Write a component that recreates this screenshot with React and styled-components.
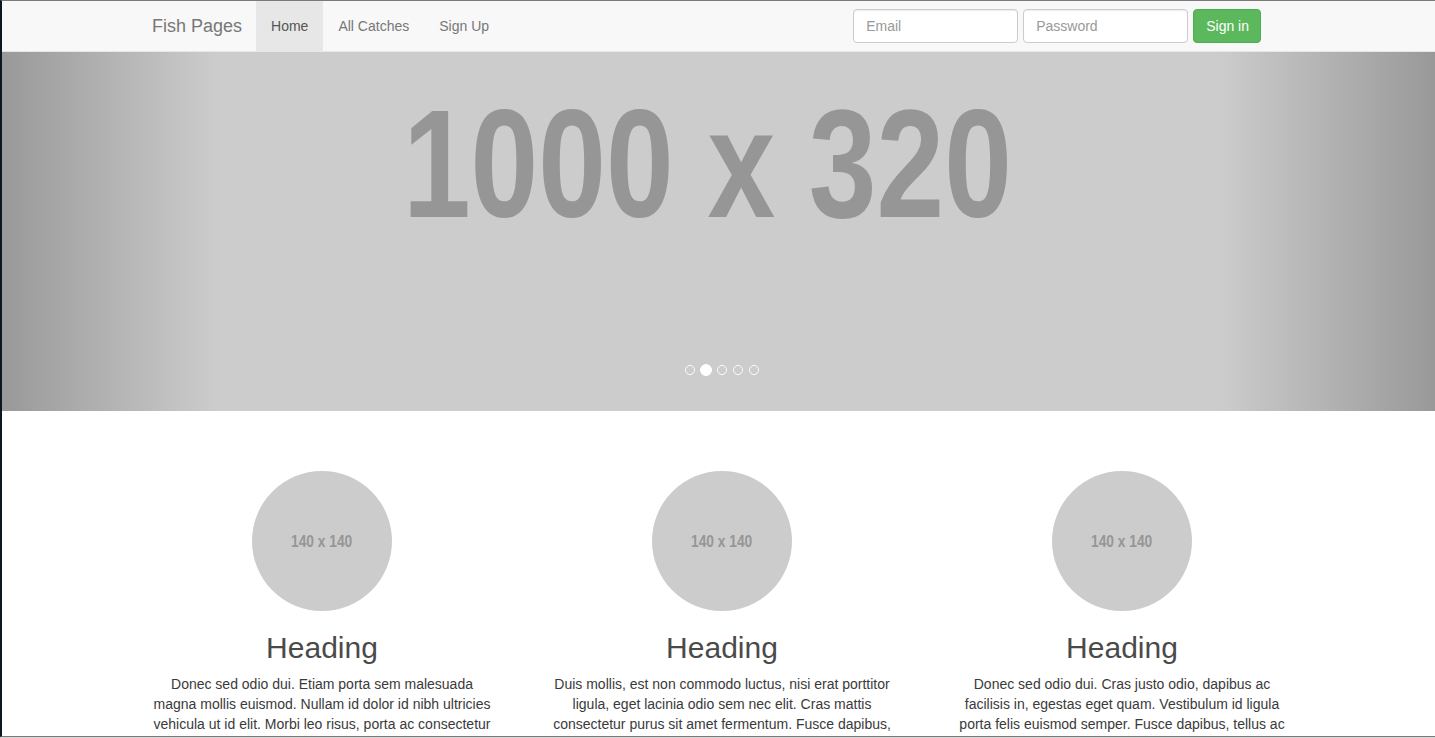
import React from 'react'
import styled, { createGlobalStyle } from 'styled-components'

const GlobalStyle = createGlobalStyle`
  html, body {
    margin: 0;
    padding: 0;
    background: #d6d6d6;
  }
  * {
    box-sizing: border-box;
  }
`;

const slides = [0, 1, 2, 3, 4];

const features = [
    {
        text: 'Donec sed odio dui. Etiam porta sem malesuada magna mollis euismod. Nullam id dolor id nibh ultricies vehicula ut id elit. Morbi leo risus, porta ac consectetur ac, vestibulum at eros. Praesent commodo cursus magna.'
    },
    {
        text: 'Duis mollis, est non commodo luctus, nisi erat porttitor ligula, eget lacinia odio sem nec elit. Cras mattis consectetur purus sit amet fermentum. Fusce dapibus, tellus ac cursus commodo, tortor mauris condimentum nibh.'
    },
    {
        text: 'Donec sed odio dui. Cras justo odio, dapibus ac facilisis in, egestas eget quam. Vestibulum id ligula porta felis euismod semper. Fusce dapibus, tellus ac cursus commodo, tortor mauris condimentum nibh, ut fermentum massa.'
    }
];

function App() {
    return (
        <>
            <GlobalStyle />
            <Frame>
                <Navbar>
                    <NavContainer>
                        <Brand href="#">Fish Pages</Brand>
                        <NavList>
                            <NavItem active>Home</NavItem>
                            <NavItem>All Catches</NavItem>
                            <NavItem>Sign Up</NavItem>
                        </NavList>
                        <SignInForm onSubmit={e => e.preventDefault()}>
                            <Field type="text" placeholder="Email" />
                            <Field type="password" placeholder="Password" />
                            <SuccessButton type="submit">Sign in</SuccessButton>
                        </SignInForm>
                    </NavContainer>
                </Navbar>

                <Carousel>
                    <Control side="left" />
                    <SlideImage>
                        <PlaceholderText>1000 x 320</PlaceholderText>
                    </SlideImage>
                    <Control side="right" />
                    <Indicators>
                        {slides.map(i => (
                            <Dot key={i} active={i === 1} />
                        ))}
                    </Indicators>
                </Carousel>

                <Marketing>
                    {features.map((f, i) => (
                        <Column key={i}>
                            <Thumb><ThumbLabel>140 x 140</ThumbLabel></Thumb>
                            <Heading>Heading</Heading>
                            <Para>{f.text}</Para>
                        </Column>
                    ))}
                </Marketing>
            </Frame>
        </>
    )
}

const Frame = styled.div`
    height: 737px;
    overflow: hidden;
    border-left: 2px solid #0e1620;
    border-top: 1px solid #7a7a7a;
    border-bottom: 1px solid #7a7a7a;
    background: #fff;
    font-family: "Liberation Sans", Arial, sans-serif;
    font-size: 14px;
    line-height: 20px;
    color: #333;
`;

const Navbar = styled.nav`
    height: 51px;
    background: #f8f8f8;
    border-bottom: 1px solid #e7e7e7;
`;

const NavContainer = styled.div`
    width: 1170px;
    margin-left: 134px;
    height: 50px;
    display: flex;
    align-items: stretch;
`;

const Brand = styled.a`
    padding: 15px 15px 15px 16px;
    margin-right: -1px;
    font-size: 18px;
    line-height: 20px;
    color: #777;
    text-decoration: none;
`;

const NavList = styled.ul`
    display: flex;
    margin: 0;
    padding: 0;
    list-style: none;
`;

const NavItem = styled.li`
    padding: 15px;
    line-height: 20px;
    color: ${props => props.active ? '#555' : '#777'};
    background: ${props => props.active ? '#e7e7e7' : 'transparent'};
    cursor: pointer;
`;

const SignInForm = styled.form`
    margin: 8px 45px 0 auto;
    display: flex;
    align-items: flex-start;
    gap: 5px;
`;

const Field = styled.input`
    width: 165px;
    height: 34px;
    padding: 6px 12px;
    font-family: inherit;
    font-size: 14px;
    color: #555;
    background: #fff;
    border: 1px solid #ccc;
    border-radius: 4px;
    box-shadow: inset 0 1px 1px rgba(0, 0, 0, .075);
    outline: none;
    &::placeholder {
        color: #999;
    }
`;

const SuccessButton = styled.button`
    height: 34px;
    padding: 6px 11px 6px 12px;
    font-family: inherit;
    font-size: 14px;
    line-height: 20px;
    color: #fff;
    background: #5cb85c;
    border: 1px solid #4cae4c;
    border-radius: 4px;
    cursor: pointer;
`;

const Carousel = styled.div`
    position: relative;
    height: 359px;
    margin-bottom: 60px;
    background: #ccc;
    display: flex;
`;

const Control = styled.div`
    width: 15%;
    flex-shrink: 0;
    background: ${props => props.side === 'left'
        ? 'linear-gradient(to right, rgba(0,0,0,.25), rgba(0,0,0,0))'
        : 'linear-gradient(to right, rgba(0,0,0,0), rgba(0,0,0,.25))'};
`;

const SlideImage = styled.div`
    flex: 1;
    display: flex;
    justify-content: center;
    align-items: flex-start;
    padding-top: 32px;
    padding-right: 22px;
`;

const PlaceholderText = styled.span`
    display: inline-block;
    font-family: "Liberation Sans", Arial, sans-serif;
    font-weight: bold;
    font-size: 154px;
    line-height: 160px;
    color: #969696;
    white-space: nowrap;
    transform: scaleX(0.79);
`;

const Indicators = styled.div`
    position: absolute;
    left: 0;
    right: 0;
    bottom: 35px;
    display: flex;
    justify-content: center;
    align-items: center;
    gap: 4px;
    padding-left: 7px;
`;

const Dot = styled.span`
    width: ${props => props.active ? '12px' : '10px'};
    height: ${props => props.active ? '12px' : '10px'};
    margin: ${props => props.active ? '0' : '1px'};
    border-radius: 50%;
    border: 1px solid #fff;
    background: ${props => props.active ? '#fff' : 'transparent'};
`;

const Marketing = styled.section`
    width: 1200px;
    margin-left: 120px;
    display: grid;
    grid-template-columns: repeat(3, 1fr);
`;

const Column = styled.div`
    padding: 0 15px;
    display: flex;
    flex-direction: column;
    align-items: center;
    text-align: center;
`;

const Thumb = styled.div`
    width: 140px;
    height: 140px;
    border-radius: 50%;
    background: #ccc;
    display: flex;
    align-items: center;
    justify-content: center;
`;

const ThumbLabel = styled.span`
    display: inline-block;
    font-family: "Liberation Sans", Arial, sans-serif;
    font-weight: bold;
    font-size: 16px;
    color: #969696;
    transform: scaleX(0.86);
    margin-top: 2px;
`;

const Heading = styled.h2`
    margin: 20px 0 10px;
    font-size: 30px;
    font-weight: 500;
    line-height: 33px;
    color: #4a4a4a;
`;

const Para = styled.p`
    max-width: 344px;
    margin: 0 0 10px;
    font-size: 14px;
    line-height: 20px;
    color: #3a3a3a;
`;

export default App
